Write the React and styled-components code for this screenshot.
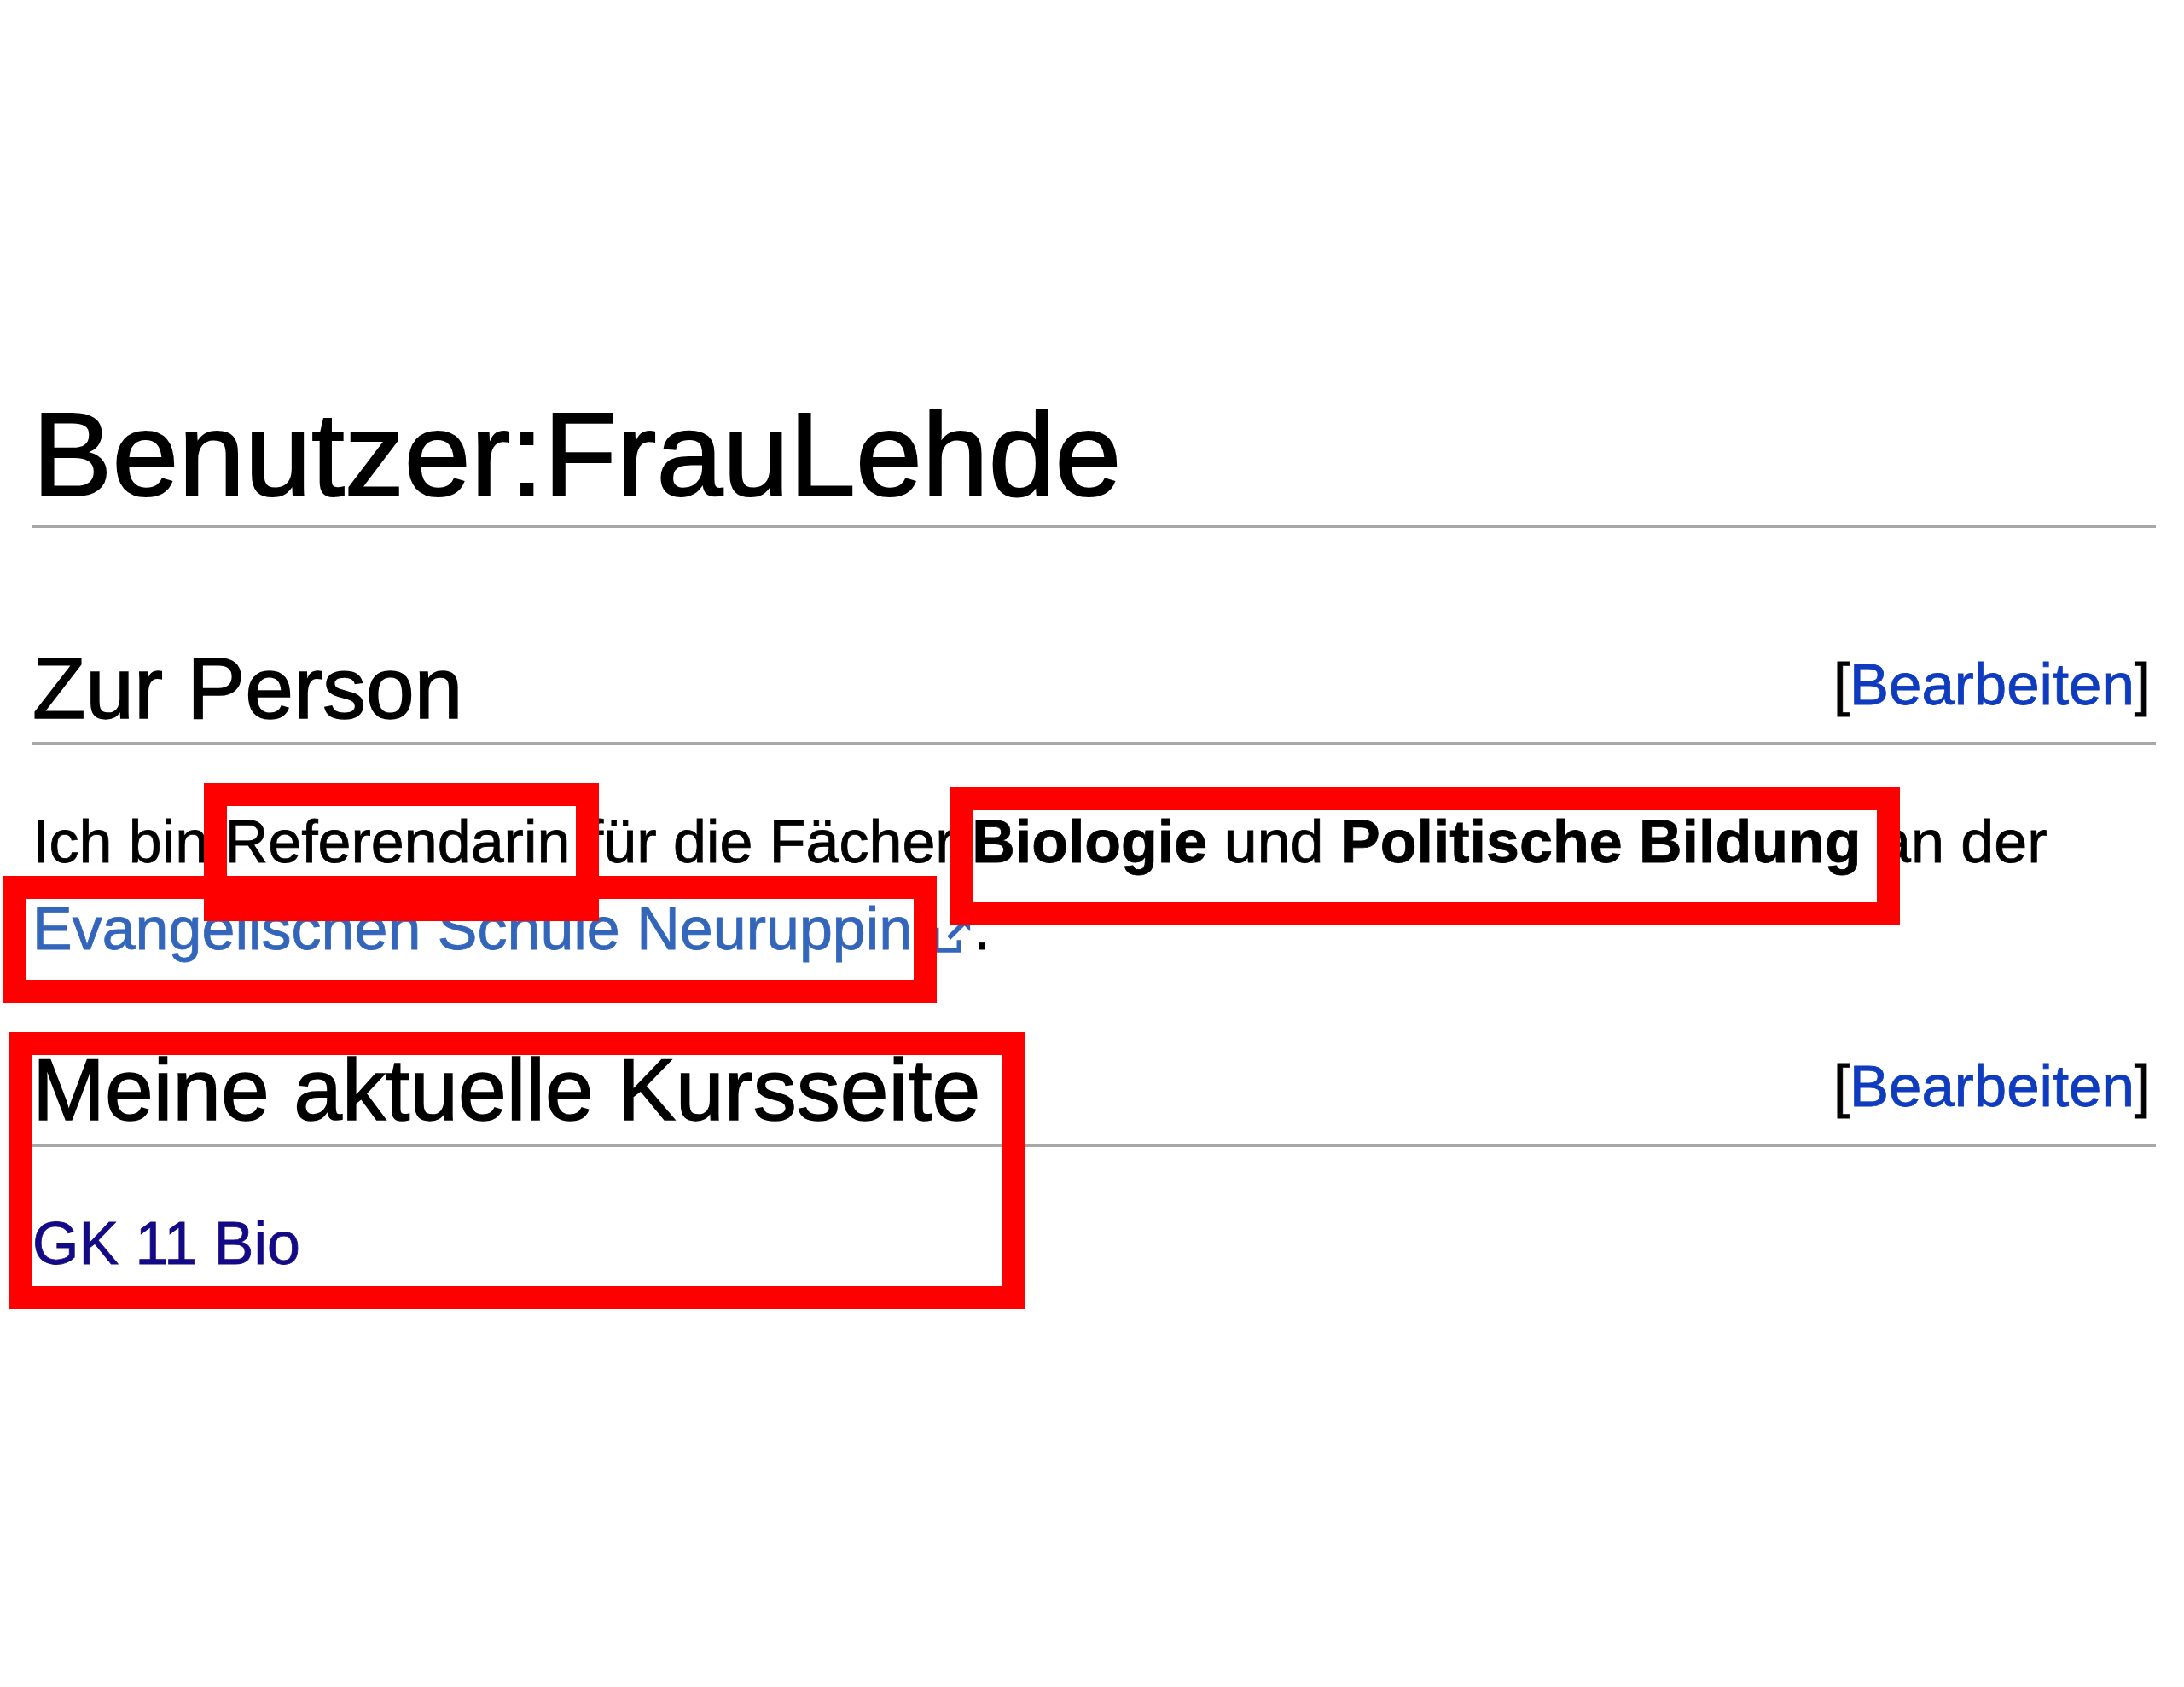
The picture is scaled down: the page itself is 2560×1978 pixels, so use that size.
import React from "react";
import styled, { createGlobalStyle } from "styled-components";

const GlobalStyle = createGlobalStyle`
  body {
    margin: 0;
    background-color: #ffffff;
    font-family: "Liberation Sans", Arial, sans-serif;
    color: #000000;
  }
`;

const Page = styled.div`
  position: relative;
  box-sizing: border-box;
  width: 2560px;
  min-height: 1978px;
  padding: 0 33px 0 38px;
  overflow: hidden;
`;

const Title = styled.h1`
  margin: 451px 0 0;
  font-size: 140px;
  font-weight: normal;
  line-height: 164px;
  -webkit-text-stroke: 2px #000000;
  border-bottom: 4px solid #a8a8a8;
`;

const SectionHeading = styled.h2`
  display: flex;
  justify-content: space-between;
  align-items: flex-start;
  margin: ${(props) => props.$top}px 0 0;
  padding-bottom: 3px;
  font-size: 102px;
  font-weight: normal;
  line-height: 120px;
  border-bottom: 4px solid #a8a8a8;
`;

const HeadingText = styled.span`
  -webkit-text-stroke: 1.5px #000000;
`;

const EditSection = styled.span`
  margin-right: 6px;
  padding-top: 16px;
  font-size: 69px;
  line-height: 80px;
  -webkit-text-stroke: 0.8px currentColor;
`;

const EditLink = styled.a`
  color: #0f3bbf;
  text-decoration: none;
`;

const Paragraph = styled.p`
  margin: 62px 0 0;
  font-size: 70px;
  line-height: 102px;
  -webkit-text-stroke: 0.8px currentColor;
`;

const ExternalLink = styled.a`
  color: #3366bb;
  text-decoration: none;
`;

const InternalLink = styled.a`
  color: ${(props) => (props.$visited ? "#140a85" : "#0f3bbf")};
  text-decoration: none;
`;

const ExternalIcon = styled.svg`
  width: 48px;
  height: 48px;
  margin-left: 24px;
  vertical-align: -6px;
`;

const Annotation = styled.div`
  position: absolute;
  box-sizing: border-box;
  left: ${(props) => props.$x}px;
  top: ${(props) => props.$y}px;
  width: ${(props) => props.$w}px;
  height: ${(props) => props.$h}px;
  border: 27px solid #ff0000;
  pointer-events: none;
`;

function Edit() {
  return (
    <EditSection>
      [<EditLink href="#">Bearbeiten</EditLink>]
    </EditSection>
  );
}

const annotations = [
  { x: 4, y: 1027, w: 1094, h: 149 },
  { x: 239, y: 918, w: 463, h: 162 },
  { x: 1114, y: 923, w: 1113, h: 162 },
  { x: 10, y: 1210, w: 1191, h: 325 },
];

function App() {
  return (
    <>
      <GlobalStyle />
      <Page>
        <Title>Benutzer:FrauLehde</Title>
        <SectionHeading $top={128}>
          <HeadingText>Zur Person</HeadingText>
          <Edit />
        </SectionHeading>
        <Paragraph>
          Ich bin Referendarin für die Fächer <b>Biologie</b> und{" "}
          <b>Politische Bildung</b> an der{" "}
          <ExternalLink href="#">
            Evangelischen Schule Neuruppin
            <ExternalIcon viewBox="0 0 10 10" fill="none">
              <path
                d="M1 3.5 V9 H6.5 V6.5"
                stroke="#3366bb"
                strokeWidth="1.1"
              />
              <path d="M4 6 L8.6 1.4" stroke="#3366bb" strokeWidth="1.2" />
              <path d="M5.6 0.8 H9.2 V4.4 Z" fill="#3366bb" />
            </ExternalIcon>
          </ExternalLink>
          .
        </Paragraph>
        <SectionHeading $top={78}>
          <HeadingText>Meine aktuelle Kursseite</HeadingText>
          <Edit />
        </SectionHeading>
        <Paragraph>
          <InternalLink href="#" $visited>
            GK 11 Bio
          </InternalLink>
        </Paragraph>
        {annotations.map((a, i) => (
          <Annotation key={i} $x={a.x} $y={a.y} $w={a.w} $h={a.h} />
        ))}
      </Page>
    </>
  );
}

export default App;
